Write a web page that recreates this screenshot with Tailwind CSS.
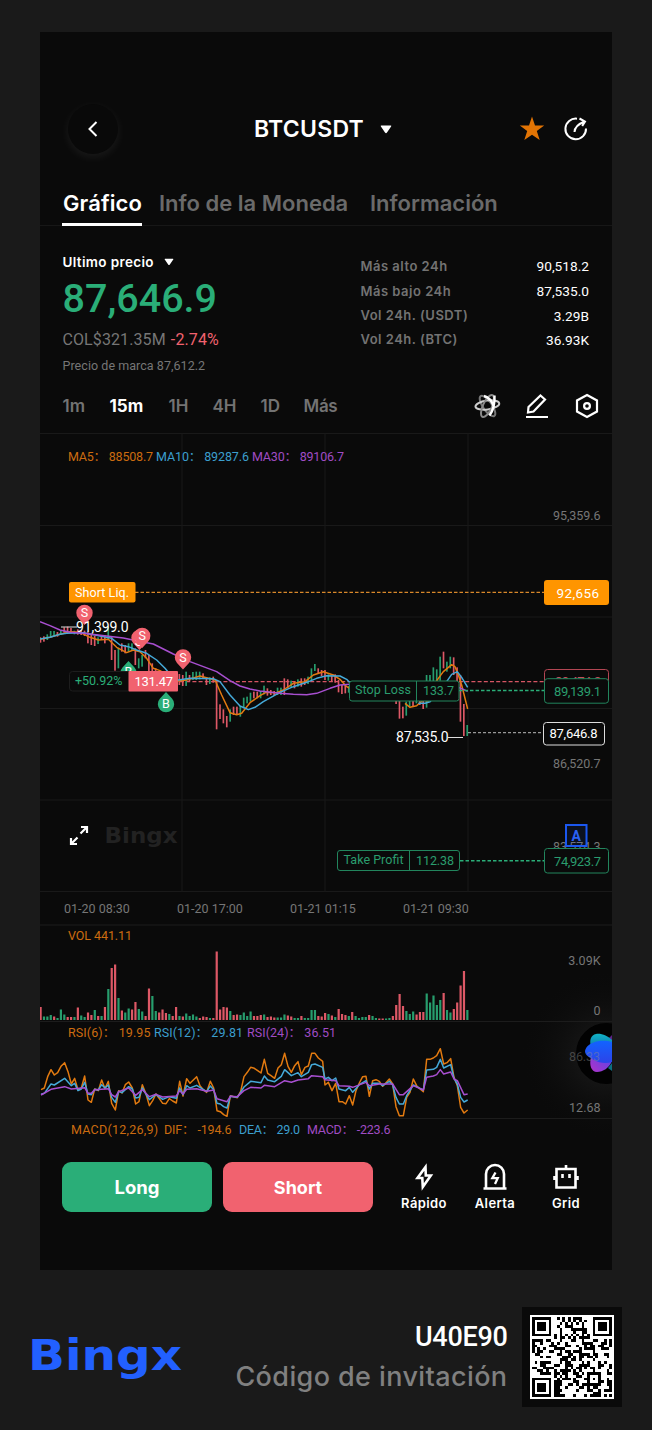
<!DOCTYPE html>
<html lang="es">

<head>
  <meta charset="UTF-8">
  <meta name="viewport" content="width=device-width, initial-scale=1.0">
  <title>BTCUSDT - BingX</title>
  <script src="https://cdn.jsdelivr.net/npm/@tailwindcss/browser@4"></script>
</head>

<body class="bg-[#1a1a1a] w-[652px] h-[1430px] overflow-hidden font-['Inter',sans-serif] text-white">
  <main class="mt-8 mx-10 w-[572px] h-[1238px] bg-[#0a0a0a] flex flex-col overflow-hidden">

    <!-- Header -->
    <header class="mt-16 h-[66px] shrink-0 flex items-center pl-7 pr-6">
      <button class="size-[50px] rounded-full flex items-center justify-center bg-[#090909] shadow-[0_3px_8px_1px_rgba(255,255,255,0.06)]">
        <svg width="12" height="18" viewBox="0 0 12 18" fill="none" stroke="#fff" stroke-width="2"><path d="M9.5 2 2.5 9l7 7"/></svg>
      </button>
      <h1 class="ml-[136px] text-[23px] leading-7 font-semibold tracking-[0.25px]">BTCUSDT</h1>
      <svg class="ml-4" width="12" height="9" viewBox="0 0 12 9"><path d="M1.4.6h9.2q1.2 0 .5 1L7 7.6q-1 1.2-2 0L.9 1.6q-.7-1 .5-1z" fill="#fff"/></svg>
      <svg class="ml-auto" width="26" height="26" viewBox="0 0 26 26"><path d="M13 .5l3 9h9.2l-7.4 5.6 2.9 9L13 18.7l-7.700 5.400 2.900-9L.8 9.500H10z" fill="#e27404"/></svg>
      <svg class="ml-[19px]" width="24" height="24" viewBox="0 0 24 24" fill="none" stroke="#fff" stroke-width="2"><path d="M13 1.700A10.300 10.300 0 1 0 22 11.500"/><path d="M10.500 15c.2-4 2.500-7.500 9.500-10.300M15.500 1.500l5.500 3-2.800 4.500"/></svg>
    </header>

    <!-- Tabs -->
    <nav class="mt-5 h-[44px] shrink-0 flex pl-[22px] text-[22px] leading-[43px] border-b border-[#171717]">
      <a class="h-[44px] border-b-3 border-white w-[80px] font-semibold whitespace-nowrap pl-px tracking-[0.1px]">Gráfico</a>
      <a class="ml-[17px] w-[194px] font-semibold text-[#6a6a6a] whitespace-nowrap">Info de la Moneda</a>
      <a class="ml-[17px] font-semibold text-[#6a6a6a]">Información</a>
    </nav>

    <!-- Price info -->
    <section class="h-[153px] shrink-0 flex justify-between pl-[22.5px] pr-[23px]">
      <div class="pt-[26px]">
        <div class="h-5 flex items-center text-[13.500px] font-semibold tracking-[0.35px]">Ultimo precio
          <svg class="ml-[10px]" width="10" height="8" viewBox="0 0 12 9"><path d="M1.4.6h9.2q1.2 0 .5 1L7 7.6q-1 1.2-2 0L.9 1.6q-.7-1 .5-1z" fill="#fff"/></svg>
        </div>
        <div class="h-[54px] leading-[53px] font-['Roboto',sans-serif] font-medium text-[39.500px] text-[#2aae78]">87,646.9</div>
        <div class="h-[26px] leading-[27px] font-['Roboto',sans-serif] text-[16px] tracking-[0.1px] text-[#767676]">COL$321.35M <span class="ml-px text-[#f1626f]">-2.74%</span></div>
        <div class="h-[27px] leading-[27px] font-['Roboto',sans-serif] text-[12.500px] text-[#767676] tracking-[0.05px]">Precio de marca 87,612.2</div>
      </div>
      <div class="w-[228.500px] pt-[27px] text-[13px] font-semibold text-[#737373] tracking-[0.5px]">
        <div class="h-[26px] flex justify-between items-center"><span class="pt-px">Más alto 24h</span> <span class="font-['Roboto',sans-serif] text-[13.700px] font-normal tracking-normal text-white">90,518.2</span></div>
        <div class="h-[25px] flex justify-between items-center"><span class="pt-px">Más bajo 24h</span> <span class="font-['Roboto',sans-serif] text-[13.700px] font-normal tracking-normal text-white">87,535.0</span></div>
        <div class="h-6 flex justify-between items-center">Vol 24h. (USDT) <span class="font-['Roboto',sans-serif] text-[13.700px] font-normal tracking-normal text-white">3.29B</span></div>
        <div class="h-6 flex justify-between items-center">Vol 24h. (BTC) <span class="font-['Roboto',sans-serif] text-[13.700px] font-normal tracking-normal text-white">36.93K</span></div>
      </div>
    </section>

    <!-- Timeframes -->
    <section class="h-[54px] shrink-0 flex items-center pl-[22.5px] pr-[13px] text-[17px] font-semibold text-[#737373]">
      <span class="w-[47px] pt-0.5">1m</span>
      <span class="w-[59px] pt-0.5 font-bold text-white">15m</span>
      <span class="w-[44px] pt-0.5">1H</span>
      <span class="w-[48px] pt-0.5">4H</span>
      <span class="w-[43px] pt-0.5">1D</span>
      <span class="pt-0.5 tracking-[-0.3px]">Más</span>
      <svg class="ml-auto" width="27" height="28" viewBox="0 0 27 28" fill="none" stroke-width="2">
        <ellipse cx="13.500" cy="14" rx="12" ry="4.500" stroke="#777" transform="rotate(55 13.500 14)"/>
        <ellipse cx="13.500" cy="13" rx="12" ry="4.500" stroke="#ccc" transform="rotate(-8 13.500 14)"/>
        <ellipse cx="13.500" cy="14" rx="12" ry="4.500" stroke="#8a8a8a" transform="rotate(-65 13.500 14)"/>
        <path d="M10 4c4 1 8 5 10 11M20.500 3.500c.5 8-1.500 15-5 20" stroke="#fff" stroke-width="2.400"/>
      </svg>
      <svg class="ml-6" width="24" height="26" viewBox="0 0 24 26" fill="none" stroke="#fff" stroke-width="2.200"><path d="M15.500 2.500l4.500 4L8.500 18.500l-5.500 1 .5-5.500zM1 24h22"/></svg>
      <svg class="ml-[26px]" width="24" height="26" viewBox="0 0 24 26" fill="none" stroke="#fff" stroke-width="2.200"><path d="M12 2l10 5.500v11L12 24 2 18.500v-11z"/><circle cx="12" cy="13" r="2.900"/></svg>
    </section>

    <!-- Candle chart -->
    <svg class="shrink-0" width="572" height="459" viewBox="0 0 572 459" font-family="Roboto, 'Noto Sans CJK SC', sans-serif" font-size="12.500">
      <path d="M0 .5h572M0 92.500h572M0 184h572M0 275.500h572M0 367h572M0 458.500h572M142 0v459M285 0v459M428 0v459" stroke="#191919"/>
      <text x="28" y="28" fill="#cc6c10" textLength="85">MA5： 88508.7</text>
      <text x="116" y="28" fill="#3c9fce" textLength="93">MA10： 89287.6</text>
      <text x="212" y="28" fill="#a04cc4" textLength="92">MA30： 89106.7</text>
      <g fill="#767676">
        <text x="513" y="87" textLength="47.500">95,359.6</text>
        <text x="513" y="335" textLength="47.500">86,520.7</text>
        <text x="513" y="418" textLength="47.500">83,574.3</text>
      </g>

      <!-- watermark and fullscreen icon -->
      <text x="64.500" y="410" font-family="DejaVu Sans" font-weight="700" font-size="21.500" fill="#222" textLength="73" lengthAdjust="spacingAndGlyphs">Bingx</text>
      <path d="M41 394h6v6M46.500 394.500l-6 6M31 405v6h6M31.500 410.500l6-6" stroke="#fff" stroke-width="2.200" fill="none"/>

      <path d="M95 159.300h409" stroke="#d9882a" stroke-width="1.300" stroke-dasharray="3.500 2"/>
      <path d="M140 248.700h364" stroke="#d65563" stroke-width="1.300" stroke-dasharray="4 2.200"/>
      <g transform="translate(0 167) scale(.33333)">
        <g id="candles"></g>
        <g fill="none" stroke-width="4.500" stroke-linejoin="round">
          <path stroke="#e27a10" d="M0 118L30 112 60 103 90 95 120 97 150 112 175 120 205 118 230 142 260 158 280 150 300 155 320 175 340 205 360 212 400 235 415 243 440 240 480 228 525 240 545 285 570 338 590 344 605 340 630 308 660 287 678 277 710 278 730 270 760 250 795 245 820 225 850 215 880 225 900 238 920 260 935 268M1095 310L1110 322 1130 317 1150 300 1165 304 1175 280 1185 250 1195 235 1210 215 1235 194 1245 200 1255 225 1265 255 1283 327"/>
          <path stroke="#45a9d8" d="M0 117L30 112 60 103 80 100 130 98 180 108 215 115 240 135 265 140 290 150 320 160 350 180 375 205 400 235 415 240 450 235 520 236 540 245 570 285 600 318 625 329 645 322 670 305 720 277 760 260 800 247 830 235 860 227 900 228 920 238 930 248M1135 310L1155 310 1170 305 1220 245 1235 223 1252 215 1265 232 1283 262"/>
          <path stroke="#a84fd0" d="M0 65L30 77 60 90 90 97 130 100 200 108 250 114 290 122 340 132 400 162 450 185 490 200 530 215 570 242 600 258 630 267 660 273 720 280 760 283 800 284 830 280 870 265 900 255 930 253M1255 262L1270 268 1283 274"/>
        </g>
      </g>

      <!-- order markers -->
      <g text-anchor="middle" fill="#fff" font-size="12.500">
        <path d="M38.500 185.500a8.200 8.200 0 1 1 12 0l-6 6.500z" fill="#f1626f"/><text x="44.500" y="184.300">S</text>
        <path d="M93.500 210.500a8.200 8.200 0 1 1 12 0l-6 6.500z" fill="#f1626f"/><text x="98.500" y="213">S</text>
        <path d="M96.200 208.500a8.200 8.200 0 1 1 12 0l-6 6.500z" fill="#f1626f"/><text x="102.200" y="207.300">S</text>
        <path d="M137 230a8.200 8.200 0 1 1 12 0l-6 6.500z" fill="#f1626f"/><text x="143" y="228.800">S</text>
        <path d="M82.500 234.500a8.200 8.200 0 1 0 12 0l-6-6.500z" fill="#2aae78"/><text x="88.500" y="243.300">B</text>
        <path d="M120 265.500a8.200 8.200 0 1 0 12 0l-6-6.500z" fill="#2aae78"/><text x="126" y="275.300">B</text>
      </g>
      <path d="M21 194h16" stroke="#ddd"/>
      <text x="36" y="198.500" font-size="14" fill="#fff" textLength="52.500">91,399.0</text>
      <text x="356" y="309" font-size="14" fill="#fff" textLength="52.500">87,535.0</text>
      <path d="M408 304.500h15" stroke="#ddd"/>

      <!-- Short liq -->
      <rect x="29" y="149" width="66.500" height="20.500" rx="2" fill="#ff9500"/>
      <text x="35" y="163.500" fill="#fff" font-size="12.500" textLength="54">Short Liq.</text>
      <rect x="504" y="147" width="65" height="25" rx="3" fill="#ff9500"/>
      <text x="516.500" y="164.500" fill="#fff" font-size="13.500" textLength="42.500">92,656</text>

      <!-- Position -->
      <rect x="29.500" y="238.500" width="90" height="19.500" rx="3" fill="#0a0a0a" stroke="#1d1d1d"/>
      <text x="35" y="251.500" fill="#2aae78" textLength="47.500">+50.92%</text>
      <rect x="88.500" y="238" width="49.500" height="20.500" rx="1" fill="#f1626f"/>
      <text x="94.500" y="252.500" fill="#fff" font-size="13" textLength="38.500">131.47</text>
      <rect x="504.500" y="236.500" width="64" height="24" rx="3" fill="#0a0a0a" stroke="#b34653"/>
      <text x="515" y="253" fill="#c54f5d" font-size="13" textLength="46">89,474.2</text>

      <!-- Stop loss -->
      <path d="M419 257.500h85" stroke="#2aae78" stroke-width="1.300" stroke-dasharray="3.500 2"/>
      <g fill="#0a0a0a" stroke="#22855d">
        <rect x="309.500" y="248" width="109.500" height="20" rx="2.500"/>
        <path d="M376.500 248v20"/>
        <rect x="504.500" y="245.700" width="64" height="24.500" rx="3"/>
      </g>
      <g fill="#2a9d6e">
        <text x="315" y="261" textLength="56">Stop Loss</text>
        <text x="383" y="262" textLength="31">133.7</text>
        <text x="514" y="263" font-size="13" textLength="47">89,139.1</text>
      </g>

      <!-- Last price -->
      <path d="M428 299.700h76" stroke="#bbb" stroke-dasharray="3 2"/>
      <rect x="503.500" y="289.500" width="61" height="22.500" rx="3" fill="#0a0a0a" stroke="#ddd"/>
      <text x="509.500" y="304.800" fill="#fff" font-size="13" textLength="48">87,646.8</text>

      <!-- Auto scale button -->
      <rect x="526" y="392" width="20.500" height="21" fill="#1b57f0" fill-opacity=".1" stroke="#1b57f0" stroke-width="2"/>
      <text x="536.200" y="408" fill="#2a62f5" font-size="14" font-weight="700" text-anchor="middle">A</text>

      <!-- Take profit -->
      <path d="M420 427.700h84" stroke="#2aae78" stroke-width="1.500" stroke-dasharray="3.500 2"/>
      <g fill="#0a0a0a" stroke="#22855d">
        <rect x="297.500" y="417.500" width="122" height="20" rx="2.500"/>
        <path d="M369.500 417.500v20"/>
        <rect x="504.500" y="415.500" width="64" height="24.500" rx="3"/>
      </g>
      <g fill="#2a9d6e">
        <text x="303.500" y="431" textLength="60">Take Profit</text>
        <text x="376" y="432" textLength="38">112.38</text>
        <text x="514" y="433" font-size="13" textLength="47">74,923.7</text>
      </g>
    </svg>

    <!-- Time axis -->
    <div class="h-8 shrink-0 flex items-center pt-0.5 pl-6 font-['Roboto',sans-serif] text-[12.500px] text-[#767676]">
      <span class="w-[113px]">01-20 08:30</span>
      <span class="w-[113px]">01-20 17:00</span>
      <span class="w-[113px]">01-21 01:15</span>
      <span>01-21 09:30</span>
    </div>

    <!-- Volume and RSI -->
    <div class="relative h-[226px] shrink-0">
      <svg width="572" height="226" viewBox="0 0 572 226" font-family="Roboto, 'Noto Sans CJK SC', sans-serif" font-size="12.500">
        <defs>
          <radialGradient id="glow"><stop offset=".3" stop-color="#151515"/><stop offset="1" stop-color="#0a0a0a" stop-opacity="0"/></radialGradient>
        </defs>
        <circle cx="566" cy="131" r="85" fill="url(#glow)"/>
        <path d="M0 1h572M0 97.500h572M0 194.500h572" stroke="#1c1c1c"/>
        <g id="volume"></g>
        <text x="28" y="16" fill="#cc6c10" textLength="64">VOL 441.11</text>
        <g fill="#767676" text-anchor="end">
          <text x="560.500" y="41">3.09K</text>
          <text x="560.500" y="90.500">0</text>
          <text x="560.500" y="187.500">12.68</text>
        </g>
        <text x="28" y="112.500" fill="#cc6c10" textLength="82.500">RSI(6)： 19.95</text>
        <text x="114" y="112.500" fill="#3c9fce" textLength="89">RSI(12)： 29.81</text>
        <text x="207" y="112.500" fill="#a04cc4" textLength="89">RSI(24)： 36.51</text>
        <g transform="scale(.33333)" fill="none" stroke-width="4.500" stroke-linejoin="round">
          <path stroke="#e27a10" d="M3 497L13 492 23 458 33 437 43 453 53 446 63 427 74 416 84 443 94 480 104 463 114 498 124 492 134 456 144 528 154 535 164 495 175 500 185 468 195 494 205 472 215 538 226 558 236 500 246 507 256 482 266 474 277 492 287 540 297 533 307 482 318 510 328 545 338 530 348 510 358 524 368 538 378 539 388 524 398 531 409 537 419 472 429 516 440 464 450 478 460 468 470 458 480 485 490 497 500 505 511 472 521 492 531 560 541 563 551 572 561 577 571 515 581 518 592 521 602 502 612 458 622 445 632 430 643 433 653 440 663 447 673 406 683 448 693 455 704 463 714 432 724 422 734 388 744 427 754 445 764 425 774 413 784 452 795 430 805 426 815 388 825 388 835 402 848 412 855 483 865 475 876 500 887 478 897 533 907 533 917 540 928 515 938 543 948 500 958 477 968 458 978 457 988 517 998 470 1008 467 1018 472 1028 487 1038 476 1048 465 1058 480 1068 548 1078 575 1090 575 1100 520 1110 505 1120 465 1130 485 1140 495 1150 503 1160 406 1170 406 1180 402 1190 395 1201 374 1211 420 1221 416 1232 404 1242 460 1252 485 1262 550 1272 567 1283 558"/>
          <path stroke="#45a9d8" d="M3 511L13 508 33 480 43 483 74 463 94 485 104 478 114 500 124 495 134 475 144 510 154 512 164 496 175 498 185 482 195 492 205 483 215 520 226 535 236 502 246 506 266 488 277 495 287 522 297 520 307 492 328 527 348 511 368 526 388 518 409 523 419 492 429 512 440 485 450 492 470 484 500 503 511 486 521 497 531 538 541 540 551 548 561 552 571 517 592 520 602 505 612 489 632 472 663 476 673 456 683 468 704 473 724 457 734 437 754 455 774 446 784 458 805 445 815 422 825 420 848 430 855 465 865 460 876 470 887 462 897 495 917 500 928 490 938 505 958 482 978 470 988 495 998 478 1018 478 1028 485 1048 472 1058 483 1068 520 1078 540 1090 540 1100 515 1120 483 1140 493 1150 498 1160 438 1180 436 1190 430 1201 406 1211 432 1232 422 1242 463 1252 480 1262 520 1272 534 1283 528"/>
          <path stroke="#a84fd0" d="M3 513L33 496 74 488 94 495 134 491 144 508 154 508 164 497 205 494 215 512 226 519 236 503 266 492 287 514 307 497 328 518 348 511 368 519 409 516 419 500 429 510 440 496 470 494 500 502 521 498 531 524 561 533 571 517 592 518 612 500 632 490 663 492 673 484 704 488 734 470 754 475 774 468 805 464 815 455 848 458 855 467 887 470 897 485 928 487 938 490 978 475 988 485 1018 480 1058 480 1078 512 1090 512 1120 485 1150 498 1160 460 1180 456 1190 452 1201 437 1211 450 1232 444 1242 465 1252 470 1272 512 1283 510"/>
        </g>
        <text x="31" y="209.500" fill="#cc6c10" textLength="87">MACD(12,26,9)</text>
        <text x="124" y="209.500" fill="#cc6c10" textLength="67.500">DIF： -194.6</text>
        <text x="199" y="209.500" fill="#3c9fce" textLength="61">DEA： 29.0</text>
        <text x="267" y="209.500" fill="#a04cc4" textLength="83.500">MACD： -223.6</text>
      </svg>

      <!-- Assistant bubble, cut by the right edge -->
      <svg class="absolute right-0 top-[96px]" width="46" height="68" viewBox="0 0 46 68" font-family="Roboto, sans-serif">
        <defs>
          <linearGradient id="cyan" x1="0" y1="0" x2="0" y2="1"><stop offset="0" stop-color="#12b4c4"/><stop offset="1" stop-color="#0a6bb0"/></linearGradient>
          <linearGradient id="blue" x1="0" y1="0" x2="0" y2="1"><stop offset="0" stop-color="#1263ff"/><stop offset="1" stop-color="#2d43e8"/></linearGradient>
          <linearGradient id="violet" x1="1" y1="0" x2="0" y2="1"><stop offset="0" stop-color="#4a49ee"/><stop offset="1" stop-color="#b032c8"/></linearGradient>
        </defs>
        <circle cx="40.500" cy="33.500" r="30.500" fill="#020202"/>
        <path d="M41 20l5-5v8z" fill="#5b2185"/>
        <path d="M25 27c-2-7 0-12 5-13s12 2 16 6v10z" fill="url(#cyan)"/>
        <path d="M42 48l4-5v8z" fill="#0d6f80"/>
        <path d="M25 37c-2 8 0 15 6 15s12-4 15-11V30z" fill="url(#violet)"/>
        <path d="M19 31c1-5 6-8.500 13-9.800 5-.7 10-.3 14 .8v20c-6 2-13 1-18-2-5-2.500-9-5-9-9z" fill="url(#blue)"/>
        <text x="3" y="41" font-size="12.500" fill="#8a8a8a" fill-opacity=".45" textLength="31">86.33</text>
      </svg>
    </div>

    <!-- Actions -->
    <section class="mt-[12px] shrink-0 flex pl-[22px]">
      <button class="w-[150px] h-[50px] rounded-[9px] bg-[#2aae78] text-[18.500px] font-bold pt-px">Long</button>
      <button class="ml-[11px] w-[150px] h-[50px] rounded-[9px] bg-[#f1626f] text-[18px] font-bold">Short</button>
      <div class="ml-[15.500px] grid grid-cols-[71px_71px_71px] text-[13px] font-semibold tracking-[0.4px] text-center">
        <div class="flex flex-col items-center">
          <svg width="28" height="30" viewBox="0 0 28 30" fill="none" stroke="#fff" stroke-width="2.600"><path d="M15.500 5L7.500 16h4.800l.5 9L20.800 13.500h-5z"/></svg>
          <span class="mt-[3px] leading-4">Rápido</span>
        </div>
        <div class="flex flex-col items-center">
          <svg width="28" height="30" viewBox="0 0 28 30" fill="none" stroke="#fff" stroke-width="2.600"><path d="M2.500 26.500h23M5 26V12a9 9 0 0 1 18 0v14"/><path d="M14.500 10.500l-3.200 5.700h5.400L14 22" stroke-width="2.300"/></svg>
          <span class="mt-[3px] leading-4">Alerta</span>
        </div>
        <div class="flex flex-col items-center">
          <svg width="28" height="30" viewBox="0 0 28 30" fill="none" stroke="#fff" stroke-width="2.600"><path d="M4.500 7h19v18.500h-19zM14 3v4M2.500 14v4M25.500 14v4M10.500 12v4M17.500 12v4"/></svg>
          <span class="mt-[3px] leading-4">Grid</span>
        </div>
      </div>
    </section>
  </main>

  <!-- Footer -->
  <footer class="h-[160px] flex items-center pl-7 pr-[30px] pt-[14px]">
    <svg width="158" height="64" viewBox="-4 0 158 64">
      <text x="-4" y="45" font-family="DejaVu Sans" font-weight="700" font-size="43.500" fill="#2260ff" textLength="154" lengthAdjust="spacingAndGlyphs">Bingx</text>
    </svg>
    <div class="ml-auto text-right">
      <div class="h-10 leading-10 font-['Roboto',sans-serif] font-medium text-[27px] tracking-[-0.3px]">U40E90</div>
      <div class="h-10 leading-10 text-[27px] font-medium tracking-[0.4px] text-[#808080]">Código de invitación</div>
    </div>
    <div class="ml-[14.500px] size-[100px] bg-[#0a0a0a] flex items-center justify-center">
      <svg class="bg-white" width="84" height="84" viewBox="-0.700 -0.700 30.400 30.400" shape-rendering="crispEdges"><path id="qr" fill="#000"/></svg>
    </div>
  </footer>

  <script>
    // low/high per candle, "r" = down, "g" = up
    const candles = `112-128r 109-125r 103-120g 93-112g 93-108g 96-110r 90-105g 82-98r 80-95r 84-97r 92-103g 88-104r 92-105r 92-108r 95-130r 105-135r 108-138r 112-132g 108-120r 105-130r
      80-120g 110-180r 150-212r 143-205g 130-155r 135-160r 130-155g 130-150g 145-195r 175-205g 165-200g 150-175r 165-215r 190-215r 205-225r 215-240r 220-245g 225-250r 225-245g 228-250r
      222-250r 222-255r 225-258r 215-258g 225-243r 216-240g 215-240g 215-238g 220-235r 235-255r 232-252g 230-248r 240-388r 313-357r 328-370r 348-382r 328-365g 320-345r 320-345r 318-350g
      293-325g 290-310g 278-305g 275-295r 275-295r 273-295g 257-283g 265-287r 270-285r 273-288r 263-285g 263-285g 235-285r 238-265r 242-262g 245-265r 238-260g 235-260r 235-255r 230-252g
      205-240g 192-213g 205-220r 210-228r 210-240r 223-242g 228-245r 223-248r 240-277r 255-282r 255-280r 258-278g 255-275r 258-280r 260-280r 260-282r 262-280r 260-280g 260-280g 262-282r
      260-282g 260-282r 262-284r 262-284g 264-290r 280-312r 280-356r 320-355r 305-347g 295-320g 290-320r 285-310g 285-315r 300-327r 225-323g 225-255g 202-260g 208-250g 170-242g 155-205r
      185-215g 170-205g 172-225r 202-270r 225-365r 312-408r 375-408g`.split(/\s+/);
    const volumes = `13r 3.5g 3.5g 5g 3.5r 2g 10.5g 5.5g 3r 3r 3g 12.5r 4.5g 3g 7.5r 5r 10g 4r 4g 13r 31g 52r 55.5r 22g 9.5r 7.5g 11.5g 10.5r 18r 11g 8.5g 4r 31.5r 24g 9g 7.5r 10.5r 7r 6g 4r
      13r 4g 3.5r 6.5g 4g 5.5g 3.5g 2r 3.5r 3r 2g 2r 68.5r 10.5r 13r 12.5r 9g 5r 5.5r 5g 7.5g 4g 8.5g 4r 4r 5r 5.5g 3r 3.5r 2.5r 2.5g 2.5g 5.5g 4.5r 3.5r 2g 2g 4r 2g 2g
      10g 10g 4r 3.5r 7r 6g 4.5r 3g 11r 6r 5r 4g 8r 4g 2g 3g 3g 5r 4g 2g 1.5r 1.5r 1.5g 2g 4r 15r 26r 14r 9g 6g 8.5g 5.5r 8r 8r 26.5g 17.5g 24.5g 15g 20g 27r
      10g 7.5g 11r 17.5r 34.5r 49r 10g`.split(/\s+/);
    const color = s => s.endsWith('r') ? '#dd5866' : '#279d6d';

    document.getElementById('candles').innerHTML = candles.map((c, i) => {
      const [top, bottom] = c.slice(0, -1).split('-').map(Number);
      return `<rect x="${10.16 * i - 1}" y="${top}" width="5" height="${bottom - top}" fill="${color(c)}"/>`;
    }).join('');

    document.getElementById('volume').innerHTML = volumes.map((v, i) => {
      const h = parseFloat(v);
      return `<rect x="${(3.387 * i - 0.5).toFixed(2)}" y="${96 - h}" width="2.200" height="${h}" fill="${color(v)}"/>`;
    }).join('');

    // Invitation QR
    const size = 29;
    let seed = 4090;
    const next = () => (seed = (seed * 1103515245 + 12345) % 2147483648) / 2147483648;
    const ring = (x, y, cx, cy) => Math.max(Math.abs(x - cx), Math.abs(y - cy));
    let d = '';
    for (let y = 0; y < size; y++) {
      for (let x = 0; x < size; x++) {
        let on = next() > 0.5;
        if (x === 6) on = y % 2 === 0;
        if (y === 6) on = x % 2 === 0;
        const a = ring(x, y, 22, 22);
        if (a <= 2) on = a !== 1;
        for (const [cx, cy] of [[3, 3], [25, 3], [3, 25]]) {
          const r = ring(x, y, cx, cy);
          if (r <= 4) on = r !== 2 && r !== 4;
        }
        if (on) d += `M${x} ${y}h1v1h-1z`;
      }
    }
    document.getElementById('qr').setAttribute('d', d);
  </script>
</body>

</html>
